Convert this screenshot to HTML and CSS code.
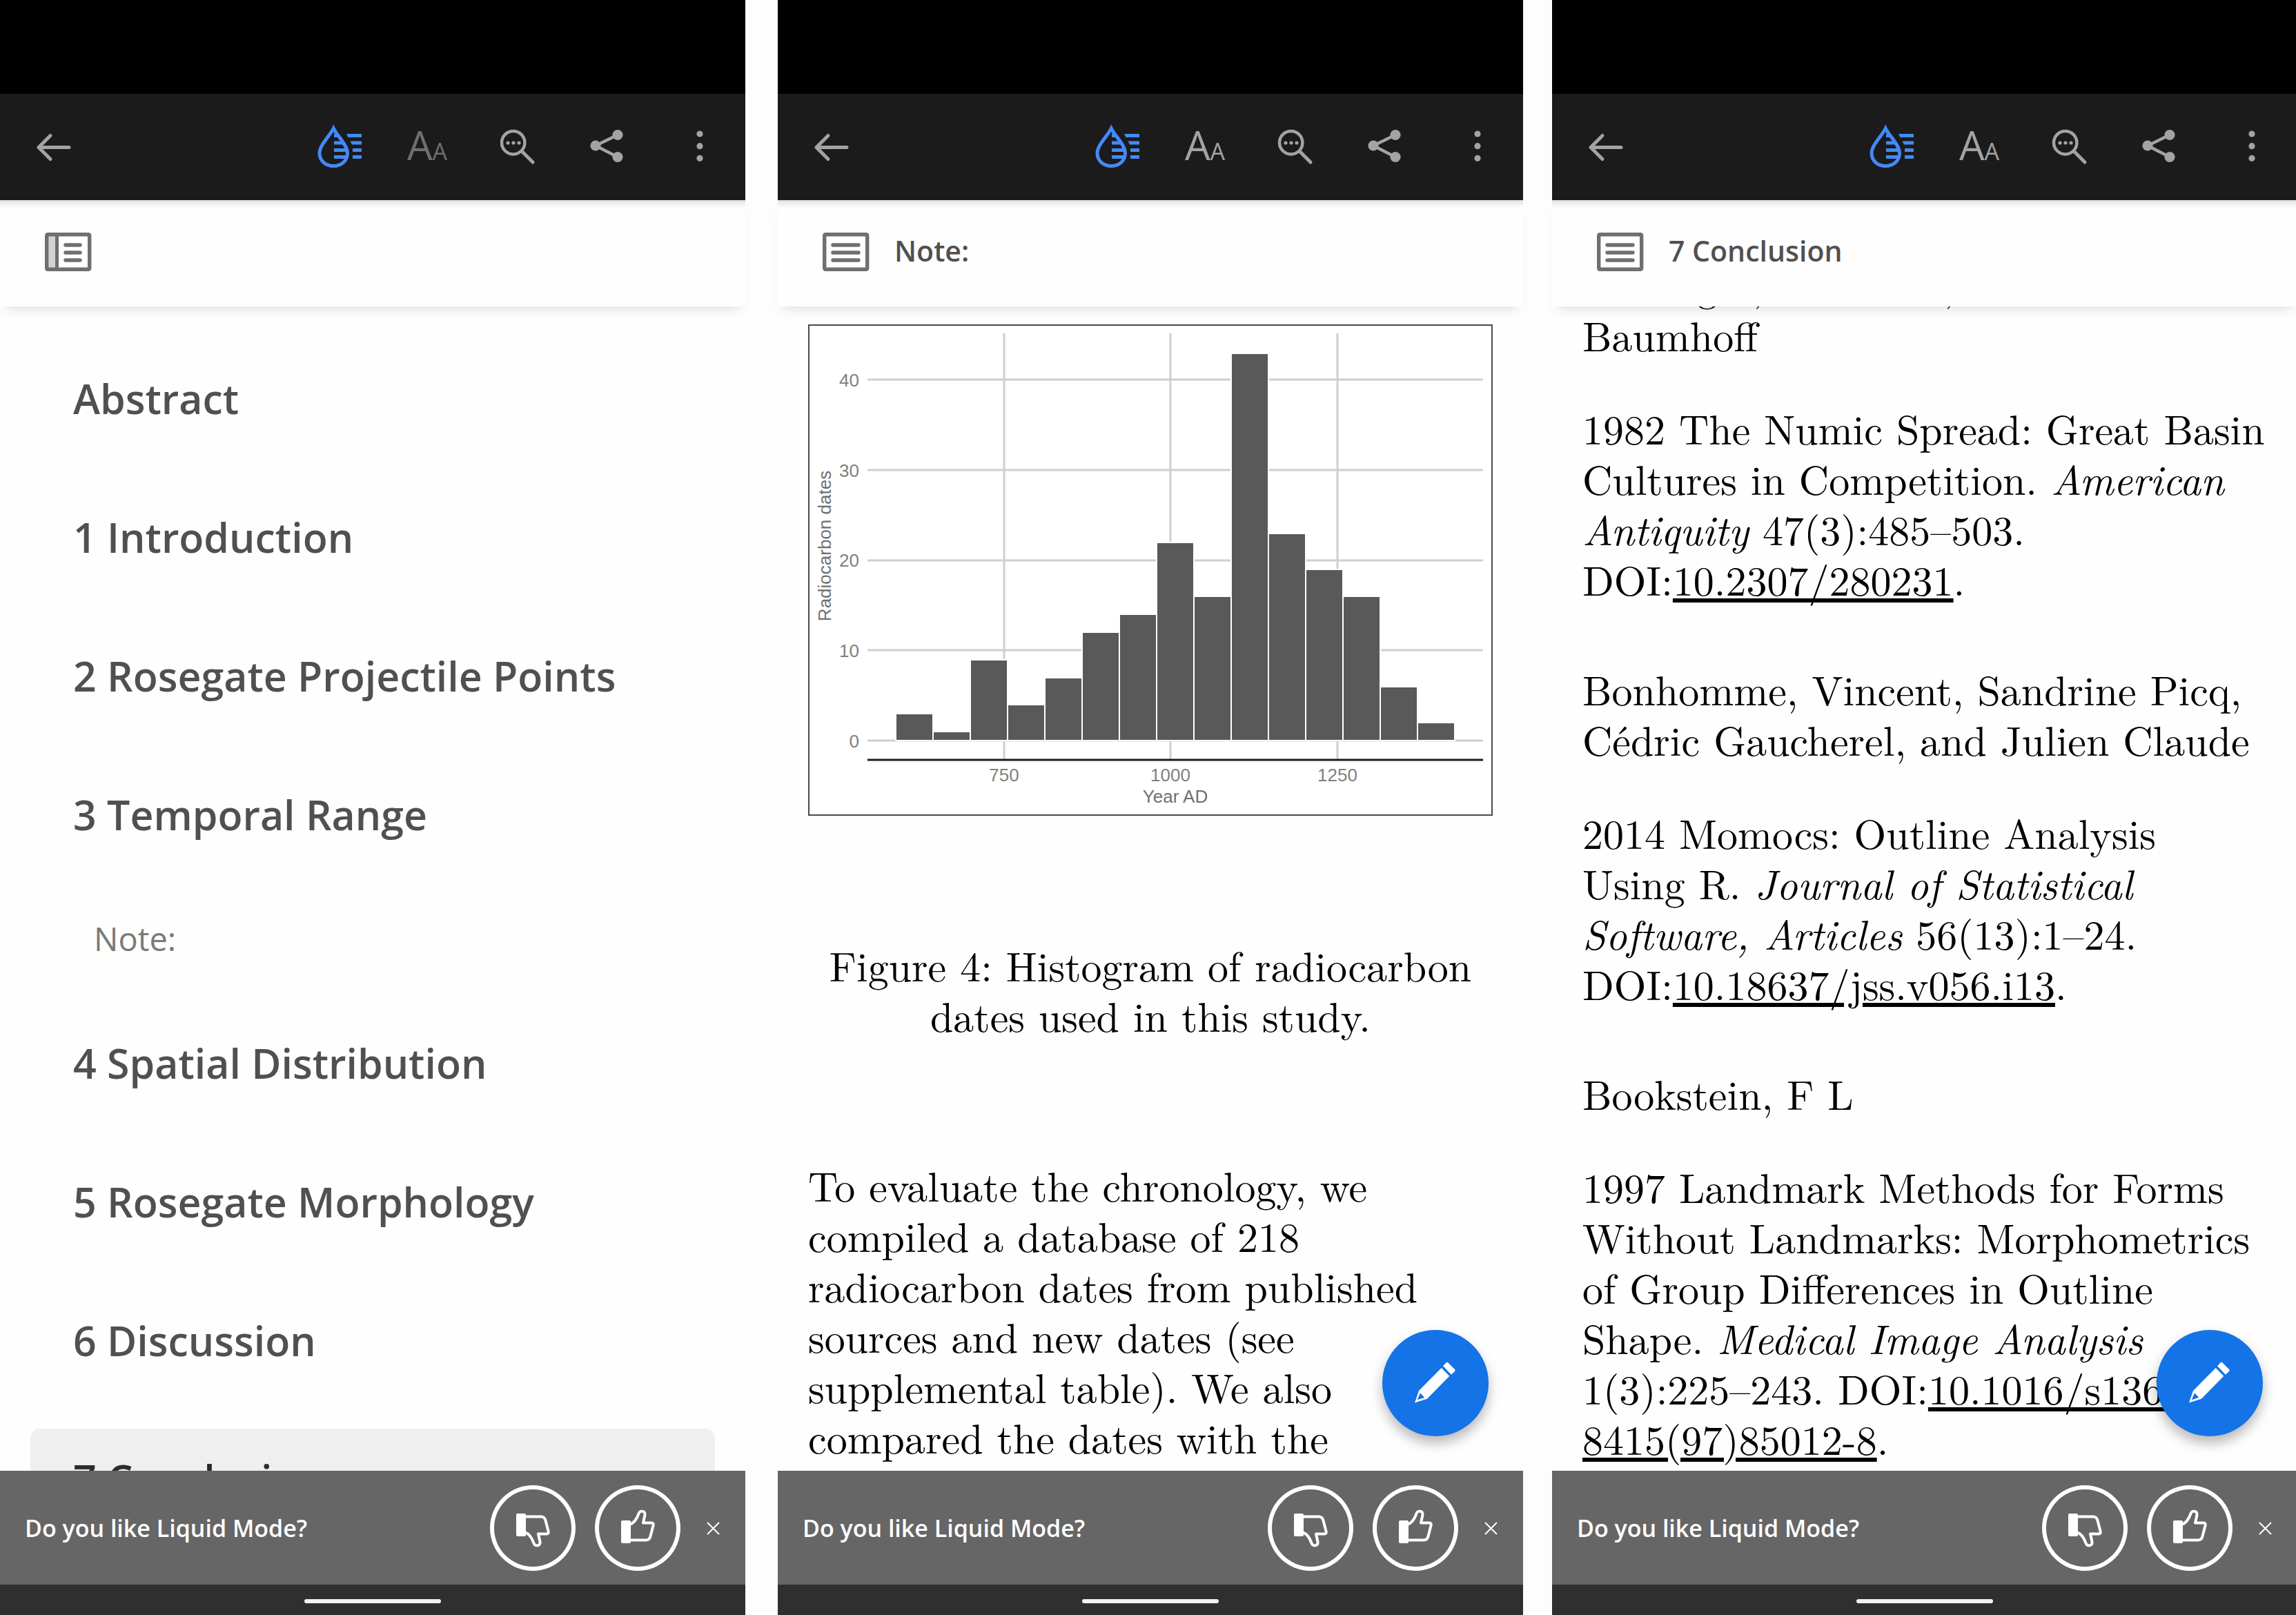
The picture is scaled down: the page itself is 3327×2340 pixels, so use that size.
FILE: index.html
```html
<!DOCTYPE html>
<html lang="en">
<head>
<meta charset="utf-8">
<title>Liquid Mode</title>
<link rel="stylesheet" href="styles.css">
</head>
<body>
<svg class="sprite" aria-hidden="true">
  <symbol id="back" viewBox="0 0 156 154"><path d="M100 77.5H56M73 60.5L56 77.5L73 94.5" fill="none" stroke="currentColor" stroke-width="5" stroke-linecap="round" stroke-linejoin="round"/></symbol>
  <symbol id="drop" viewBox="0 0 130 154">
    <path d="M53.3 50C48 61 33 74 33 86C33 97 42 104.5 53.3 104.5C64.5 104.5 73.5 97 73.5 86C73.5 74 58.5 61 53.3 50Z" fill="none" stroke="currentColor" stroke-width="5"/>
    <path d="M54 58h7l3 5H54zM54 68.500h14l3 5H54zM54 79h18v5H54zM54 89h18v5H54zM72 58h22v5H74.500zM77.500 68.500H94v5H80zM81 79h13v5H81zM81 89h13v5H81z" fill="currentColor"/>
  </symbol>
  <symbol id="search" viewBox="0 0 130 154">
    <circle cx="53.700" cy="70.700" r="16.700" fill="none" stroke="currentColor" stroke-width="4.500"/>
    <path d="M66 83L82 99" stroke="currentColor" stroke-width="5" stroke-linecap="round"/>
    <g fill="currentColor"><circle cx="46" cy="71" r="2.600"/><circle cx="54" cy="71" r="2.600"/><circle cx="62" cy="71" r="2.600"/></g>
  </symbol>
  <symbol id="share" viewBox="0 0 130 154">
    <path d="M75 59.500L43 75L75 91.500" fill="none" stroke="currentColor" stroke-width="4.500"/>
    <g fill="currentColor"><circle cx="43" cy="75" r="7.600"/><circle cx="75" cy="59.500" r="7.600"/><circle cx="75" cy="91.500" r="7.600"/></g>
  </symbol>
  <symbol id="more" viewBox="0 0 130 154">
    <g fill="currentColor"><circle cx="64" cy="58" r="4.600"/><circle cx="64" cy="75.700" r="4.600"/><circle cx="64" cy="93.300" r="4.600"/></g>
  </symbol>
  <symbol id="outline" viewBox="0 0 68 56">
    <rect x="2.700" y="2.700" width="62" height="50.600" rx="1.500" fill="none" stroke="currentColor" stroke-width="5.400"/>
    <path d="M15 18H52M15 29H52M15 40H52" stroke="currentColor" stroke-width="5.400" stroke-linecap="round"/>
  </symbol>
  <symbol id="outline-open" viewBox="0 0 68 56">
    <rect x="4" y="4" width="13" height="48" fill="#d2d2d2"/>
    <rect x="2.700" y="2.700" width="62" height="50.600" rx="1.500" fill="none" stroke="currentColor" stroke-width="5.400"/>
    <path d="M17.500 4V52" stroke="currentColor" stroke-width="5"/>
    <path d="M30 18H51M30 29H51M30 40H51" stroke="currentColor" stroke-width="5.400" stroke-linecap="round"/>
  </symbol>
  <symbol id="thumb" viewBox="0 0 124 124">
    <rect x="38" y="51" width="14" height="33" rx="2" fill="currentColor"/>
    <path d="M51 56.500C58 54.500 61 48 63.500 41C65 36 73.500 36.500 72.500 43L70 54.500H82Q85.500 54.500 84.600 58L80.500 74Q79 79.500 74 79.500H51" fill="none" stroke="currentColor" stroke-width="4" stroke-linejoin="round"/>
  </symbol>
  <symbol id="close" viewBox="0 0 94 124"><path d="M39 54L56 71M56 54L39 71" stroke="currentColor" stroke-width="2"/></symbol>
  <symbol id="pencil" viewBox="0 0 154 154">
    <path d="M88 52.300L92.500 47.500Q94 46 95.500 47.500L105 57Q106.500 58.500 105 60L100 64.700ZM85.700 55L97.300 66.700L65 99.700L47 105.500L53 88ZM55 91.300L50.700 101.300L61.300 98Z" fill="currentColor" fill-rule="evenodd"/>
  </symbol>
</svg>

<main class="screens">
  <section class="phone">
    <div class="status"></div>
    <nav class="toolbar">
      <button class="tool tool-back" aria-label="Back"><svg viewBox="0 0 156 154"><use href="#back"/></svg></button>
      <button class="tool tool-active" aria-label="Liquid Mode"><svg viewBox="0 0 130 154"><use href="#drop"/></svg></button>
      <button class="tool tool-text" aria-label="Text size" disabled>A<small>A</small></button>
      <button class="tool" aria-label="Search"><svg viewBox="0 0 130 154"><use href="#search"/></svg></button>
      <button class="tool" aria-label="Share"><svg viewBox="0 0 130 154"><use href="#share"/></svg></button>
      <button class="tool" aria-label="More"><svg viewBox="0 0 130 154"><use href="#more"/></svg></button>
    </nav>
    <header class="heading">
      <button class="outline-toggle" aria-label="Close outline"><svg viewBox="0 0 68 56"><use href="#outline-open"/></svg></button>
    </header>
    <div class="pane">
      <ul class="toc">
        <li><a href="#abstract">Abstract</a></li>
        <li><a href="#s1">1 Introduction</a></li>
        <li><a href="#s2">2 Rosegate Projectile Points</a></li>
        <li><a href="#s3">3 Temporal Range</a></li>
        <li><a class="toc-sub" href="#note">Note:</a></li>
        <li><a href="#s4">4 Spatial Distribution</a></li>
        <li><a href="#s5">5 Rosegate Morphology</a></li>
        <li><a href="#s6">6 Discussion</a></li>
        <li><a class="toc-current" href="#s7">7 Conclusion</a></li>
      </ul>
    </div>
    <footer class="feedback">
      <p>Do you like Liquid Mode?</p>
      <button class="vote" aria-label="No"><svg viewBox="0 0 124 124"><use href="#thumb" width="124" height="124" transform="matrix(1 0 0 -1 0 125)"/></svg></button>
      <button class="vote" aria-label="Yes"><svg viewBox="0 0 124 124"><use href="#thumb"/></svg></button>
      <button class="dismiss" aria-label="Dismiss"><svg viewBox="0 0 94 124"><use href="#close"/></svg></button>
    </footer>
    <div class="navbar"><span class="pill"></span></div>
  </section>

  <section class="phone">
    <div class="status"></div>
    <nav class="toolbar">
      <button class="tool tool-back" aria-label="Back"><svg viewBox="0 0 156 154"><use href="#back"/></svg></button>
      <button class="tool tool-active" aria-label="Liquid Mode"><svg viewBox="0 0 130 154"><use href="#drop"/></svg></button>
      <button class="tool tool-text" aria-label="Text size">A<small>A</small></button>
      <button class="tool" aria-label="Search"><svg viewBox="0 0 130 154"><use href="#search"/></svg></button>
      <button class="tool" aria-label="Share"><svg viewBox="0 0 130 154"><use href="#share"/></svg></button>
      <button class="tool" aria-label="More"><svg viewBox="0 0 130 154"><use href="#more"/></svg></button>
    </nav>
    <header class="heading">
      <button class="outline-toggle" aria-label="Open outline"><svg viewBox="0 0 68 56"><use href="#outline"/></svg></button>
      <h2>Note:</h2>
    </header>
    <div class="pane">
      <article class="reading">
        <figure>
          <svg class="chart" viewBox="0 0 992 712" role="img" aria-label="Histogram of radiocarbon dates">
            <rect class="frame" x="1" y="1" width="990" height="710"/>
            <path class="grid" d="M86 80H978M86 211H978M86 342H978M86 472H978M86 603H978M284 13V630M525 13V630M767 13V630"/>
            <g class="bars">
              <rect x="127" y="564" width="54" height="39"/>
              <rect x="181" y="590" width="54" height="13"/>
              <rect x="235" y="486" width="54" height="117"/>
              <rect x="289" y="551" width="54" height="52"/>
              <rect x="343" y="512" width="54" height="91"/>
              <rect x="397" y="446" width="54" height="157"/>
              <rect x="451" y="420" width="54" height="183"/>
              <rect x="505" y="316" width="54" height="287"/>
              <rect x="559" y="394" width="54" height="209"/>
              <rect x="613" y="42" width="54" height="561"/>
              <rect x="667" y="303" width="54" height="300"/>
              <rect x="721" y="355" width="54" height="248"/>
              <rect x="775" y="394" width="54" height="209"/>
              <rect x="829" y="525" width="54" height="78"/>
              <rect x="883" y="577" width="54" height="26"/>
            </g>
            <path class="axis" d="M86 631H978"/>
            <g class="labels" text-anchor="end">
              <text x="74" y="90">40</text><text x="74" y="221">30</text><text x="74" y="351">20</text><text x="74" y="482">10</text><text x="74" y="613">0</text>
            </g>
            <g class="labels" text-anchor="middle">
              <text x="284" y="662">750</text><text x="525" y="662">1000</text><text x="767" y="662">1250</text>
            </g>
            <g class="titles" text-anchor="middle">
              <text x="532" y="693">Year AD</text>
              <text transform="translate(33 321) rotate(-90)">Radiocarbon dates</text>
            </g>
          </svg>
          <figcaption>Figure 4: Histogram of radiocarbon dates used in this study.</figcaption>
        </figure>
        <p>To evaluate the chronology, we compiled a database of 218 radiocarbon dates from published sources and new dates (see supplemental table). We also compared the dates with the</p>
      </article>
      <button class="fab" aria-label="Edit"><svg viewBox="0 0 154 154"><use href="#pencil"/></svg></button>
    </div>
    <footer class="feedback">
      <p>Do you like Liquid Mode?</p>
      <button class="vote" aria-label="No"><svg viewBox="0 0 124 124"><use href="#thumb" width="124" height="124" transform="matrix(1 0 0 -1 0 125)"/></svg></button>
      <button class="vote" aria-label="Yes"><svg viewBox="0 0 124 124"><use href="#thumb"/></svg></button>
      <button class="dismiss" aria-label="Dismiss"><svg viewBox="0 0 94 124"><use href="#close"/></svg></button>
    </footer>
    <div class="navbar"><span class="pill"></span></div>
  </section>

  <section class="phone">
    <div class="status"></div>
    <nav class="toolbar">
      <button class="tool tool-back" aria-label="Back"><svg viewBox="0 0 156 154"><use href="#back"/></svg></button>
      <button class="tool tool-active" aria-label="Liquid Mode"><svg viewBox="0 0 130 154"><use href="#drop"/></svg></button>
      <button class="tool tool-text" aria-label="Text size">A<small>A</small></button>
      <button class="tool" aria-label="Search"><svg viewBox="0 0 130 154"><use href="#search"/></svg></button>
      <button class="tool" aria-label="Share"><svg viewBox="0 0 130 154"><use href="#share"/></svg></button>
      <button class="tool" aria-label="More"><svg viewBox="0 0 130 154"><use href="#more"/></svg></button>
    </nav>
    <header class="heading">
      <button class="outline-toggle" aria-label="Open outline"><svg viewBox="0 0 68 56"><use href="#outline"/></svg></button>
      <h2>7 Conclusion</h2>
    </header>
    <div class="pane">
      <article class="reading references">
        <h3>Bettinger, Robert L, and Martin A Baumhoff</h3>
        <p>1982 The Numic Spread: Great Basin Cultures in Competition. <cite>American Antiquity</cite> 47(3):485–503. DOI:<a href="#doi-1">10.2307/280231</a>.</p>
        <h3>Bonhomme, Vincent, Sandrine Picq, Cédric Gaucherel, and Julien Claude</h3>
        <p>2014 Momocs: Outline Analysis Using R. <cite>Journal of Statistical Software, Articles</cite> 56(13):1–24. DOI:<a href="#doi-2">10.18637/jss.v056.i13</a>.</p>
        <h3>Bookstein, F L</h3>
        <p>1997 Landmark Methods for Forms Without Landmarks: Morphometrics of Group Differences in Outline Shape. <cite>Medical Image Analysis</cite> 1(3):225–243. DOI:<a href="#doi-3">10.1016/s1361-8415(97)85012-8</a>.</p>
      </article>
      <button class="fab" aria-label="Edit"><svg viewBox="0 0 154 154"><use href="#pencil"/></svg></button>
    </div>
    <footer class="feedback">
      <p>Do you like Liquid Mode?</p>
      <button class="vote" aria-label="No"><svg viewBox="0 0 124 124"><use href="#thumb" width="124" height="124" transform="matrix(1 0 0 -1 0 125)"/></svg></button>
      <button class="vote" aria-label="Yes"><svg viewBox="0 0 124 124"><use href="#thumb"/></svg></button>
      <button class="dismiss" aria-label="Dismiss"><svg viewBox="0 0 94 124"><use href="#close"/></svg></button>
    </footer>
    <div class="navbar"><span class="pill"></span></div>
  </section>
</main>
</body>
</html>
```
FILE: styles.css
```css
* {
  box-sizing: border-box;
}

body {
  margin: 0;
  background: #fdfdfe;
  font-family: "Open Sans", "Noto Sans", sans-serif;
}

button {
  padding: 0;
  border: 0;
  background: none;
  color: inherit;
  font: inherit;
}

svg {
  display: block;
}

.sprite {
  position: absolute;
  width: 0;
  height: 0;
}

.screens {
  display: grid;
  grid-template-columns: 1080fr 47fr 1080fr 42fr 1078fr;
  height: 100vh;
  overflow: hidden;
}

.phone {
  display: flex;
  flex-direction: column;
  min-width: 0;
  min-height: 0;
  background: #fefefe;
}

.phone:nth-child(2) {
  grid-column: 3;
}

/* The last screen runs just past the window's edge. */
.phone:nth-child(3) {
  grid-column: 5;
  margin-right: -2px;
}

/* Top bars */

.status {
  flex: none;
  height: 136px;
  background: #000;
}

.toolbar {
  display: flex;
  flex: none;
  justify-content: flex-end;
  height: 154px;
  background: #1b1b1b;
  color: #a3a3a3;
}

.tool {
  width: 130px;
  height: 154px;
}

.tool-back {
  width: 156px;
  margin-right: auto;
}

.tool-active {
  color: #4489f7;
}

.tool-text {
  padding: 0 12px 8px 0;
  font-size: 58px;
  font-weight: 400;
}

.tool-text small {
  font-size: 34px;
}

.tool-text:disabled {
  color: #6e6e6e;
}

.heading {
  position: relative;
  z-index: 1;
  display: flex;
  flex: none;
  align-items: center;
  gap: 36px;
  height: 154px;
  padding: 0 65px 4px;
  background: linear-gradient(#e2e2e2, #fefefe 11px);
  box-shadow: 0 12px 16px -8px rgba(0, 0, 0, 0.12);
  color: #505050;
}

.outline-toggle {
  width: 68px;
  height: 56px;
  color: #6f6f6f;
}

.heading h2 {
  margin: 0;
  padding-bottom: 4px;
  font-size: 41px;
  font-weight: 600;
}

.pane {
  position: relative;
  flex: 1;
  min-height: 0;
  overflow: hidden;
}

/* Outline */

.toc {
  display: flex;
  flex-direction: column;
  gap: 53px;
  margin: 0;
  padding: 60px 44px;
  list-style: none;
}

.toc a {
  display: flex;
  align-items: center;
  height: 148px;
  padding: 0 62px 2px;
  border-radius: 14px;
  color: #505050;
  font-size: 59px;
  font-weight: 600;
  text-decoration: none;
}

.toc .toc-sub {
  height: 106px;
  padding-left: 92px;
  color: #7a7a7a;
  font-size: 47px;
  font-weight: 400;
}

.toc .toc-current {
  background: #efefef;
  color: #2c2c2c;
}

/* Document text */

.reading {
  padding: 26px 44px;
  color: #000;
  font-family: "Latin Modern Roman", "Liberation Serif", serif;
  font-size: 60px;
  line-height: 73px;
}

.reading figure,
.reading p,
.reading h3 {
  margin: 0;
  font-weight: 400;
  font-size: inherit;
}

.reading figcaption {
  margin: 178px 0 173px;
  text-align: center;
}

.references {
  margin-top: -70px;
  padding-top: 0;
}

.references h3 {
  margin-bottom: 62px;
}

.references p {
  margin-bottom: 86px;
}

.references a {
  color: inherit;
  text-decoration-thickness: 6px;
  text-underline-offset: 4px;
}

.chart {
  width: 100%;
  font-family: "Liberation Sans", sans-serif;
  font-size: 26px;
}

.frame {
  fill: #fff;
  stroke: #4a4a4a;
  stroke-width: 2;
}

.grid {
  stroke: #cfcfcf;
  stroke-width: 3;
}

.bars {
  fill: #595959;
  stroke: #fff;
  stroke-width: 2;
}

.axis {
  stroke: #1c1c1c;
  stroke-width: 3;
}

.labels {
  fill: #808080;
}

.titles {
  fill: #707070;
}

.fab {
  position: absolute;
  right: 50px;
  bottom: 50px;
  width: 154px;
  height: 154px;
  border-radius: 50%;
  background: #1473e6;
  box-shadow: 0 10px 18px rgba(0, 0, 0, 0.28);
  color: #fff;
}

/* Bottom bars */

.feedback {
  display: flex;
  flex: none;
  align-items: center;
  height: 165px;
  padding-left: 36px;
  background: #666;
  color: #fff;
}

.feedback p {
  flex: 1;
  margin: 0;
  font-size: 34px;
  font-weight: 600;
}

.vote {
  width: 124px;
  height: 124px;
  border-radius: 50%;
  box-shadow: inset 0 0 0 6px #fff;
}

.vote + .vote {
  margin-left: 28px;
}

.dismiss {
  width: 94px;
  height: 124px;
}

.navbar {
  display: flex;
  flex: none;
  align-items: center;
  justify-content: center;
  height: 44px;
  padding-top: 4px;
  background: #2f2f2f;
}

.pill {
  width: 198px;
  height: 6px;
  border-radius: 3px;
  background: #f3f0f3;
}
```
